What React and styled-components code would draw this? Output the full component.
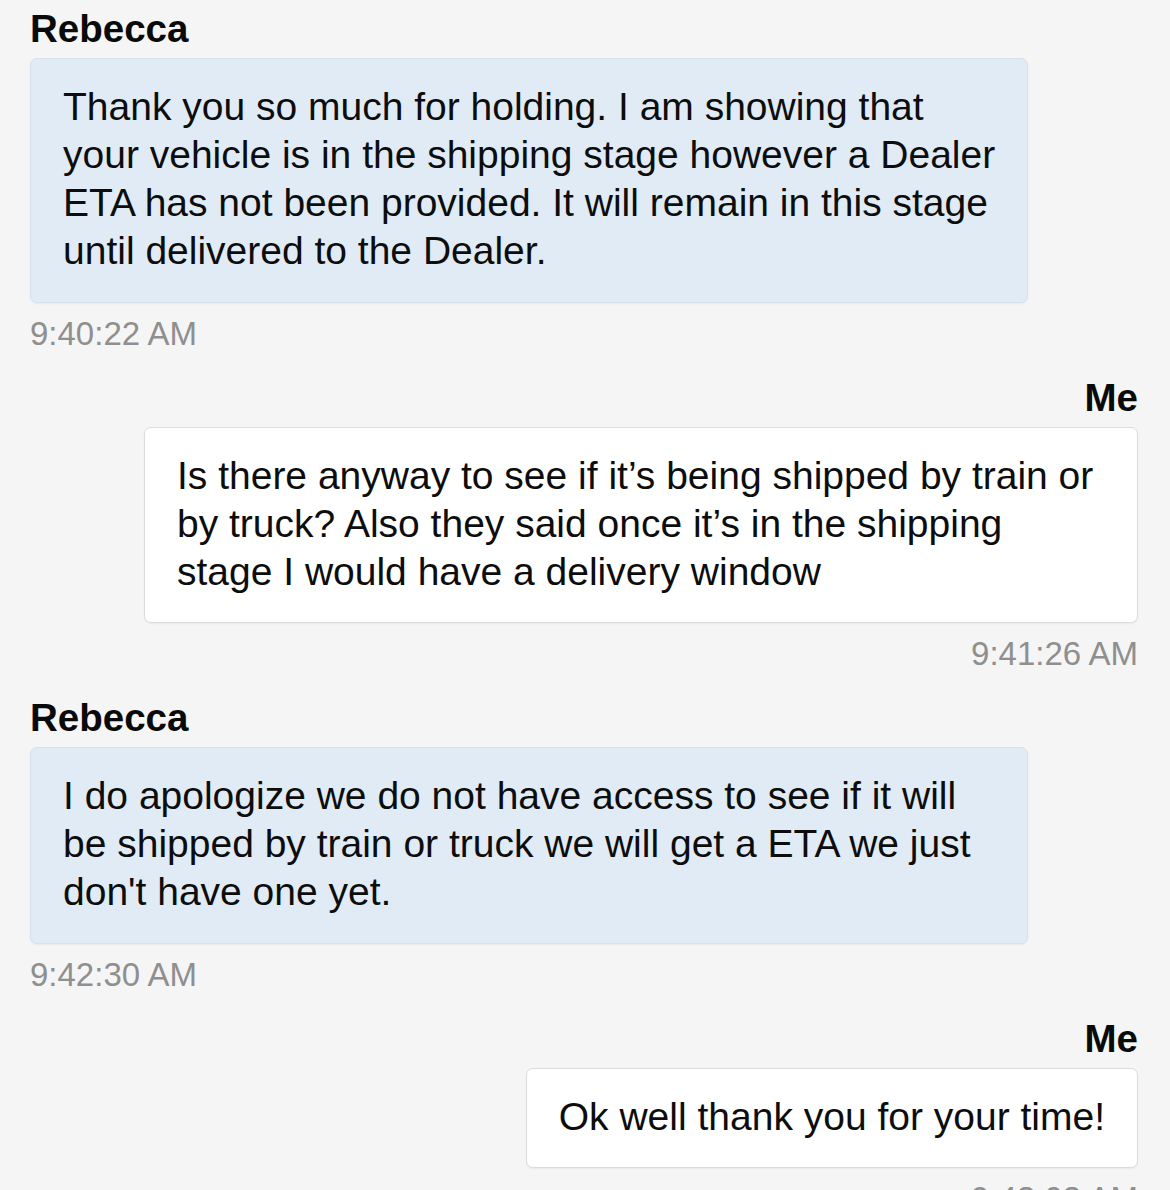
import React from "react";
import styled, { createGlobalStyle } from "styled-components";

const GlobalStyle = createGlobalStyle`
  html, body {
    margin: 0;
    padding: 0;
    background: #f5f5f5;
  }
  body {
    font-family: "Liberation Sans", Arial, Helvetica, sans-serif;
    color: #111;
  }
`;

const messages = [
  {
    from: "Rebecca",
    mine: false,
    time: "9:40:22 AM",
    text:
      "Thank you so much for holding. I am showing that your vehicle is in the shipping stage however a Dealer ETA has not been provided. It will remain in this stage until delivered to the Dealer.",
  },
  {
    from: "Me",
    mine: true,
    time: "9:41:26 AM",
    text:
      "Is there anyway to see if it\u2019s being shipped by train or by truck? Also they said once it\u2019s in the shipping stage I would have a delivery window",
  },
  {
    from: "Rebecca",
    mine: false,
    time: "9:42:30 AM",
    text:
      "I do apologize we do not have access to see if it will be shipped by train or truck we will get a ETA we just don't have one yet.",
  },
  {
    from: "Me",
    mine: true,
    time: "9:43:03 AM",
    text: "Ok well thank you for your time!",
  },
];

// styled-components
const Transcript = styled.div`
  display: flex;
  flex-direction: column;
  gap: 24px;
  padding: 9px 32px 40px 30px;
  height: 1190px;
  box-sizing: border-box;
  overflow: hidden;
`;

const Group = styled.div`
  display: flex;
  flex-direction: column;
  align-items: ${(p) => (p.mine ? "flex-end" : "flex-start")};
`;

const Sender = styled.div`
  font-size: 38.5px;
  font-weight: bold;
  line-height: 40px;
  color: #0a0a0a;
  margin-bottom: 9px;
`;

const Bubble = styled.div`
  box-sizing: border-box;
  max-width: ${(p) => (p.mine ? "994px" : "998px")};
  padding: ${(p) => (p.mine ? "24px 32px 26px 32px" : "24px 30px 27px 32px")};
  border-radius: 7px;
  font-size: 39px;
  line-height: 48px;
  color: #0d0d0d;
  background: ${(p) => (p.mine ? "#ffffff" : "#e0ebf5")};
  border: 1px solid ${(p) => (p.mine ? "#dcdcdc" : "#d6e1eb")};
  box-shadow: 0 1px 2px rgba(0, 0, 0, 0.05);
`;

const Stamp = styled.div`
  margin-top: 11px;
  font-size: 33px;
  line-height: 40px;
  color: #8f8f8f;
`;

function Message({ from, mine, time, text }) {
  return (
    <Group mine={mine}>
      <Sender>{from}</Sender>
      <Bubble mine={mine}>{text}</Bubble>
      <Stamp>{time}</Stamp>
    </Group>
  );
}

export default function App() {
  return (
    <>
      <GlobalStyle />
      <Transcript>
        {messages.map((m, i) => (
          <Message key={i} {...m} />
        ))}
      </Transcript>
    </>
  );
}
